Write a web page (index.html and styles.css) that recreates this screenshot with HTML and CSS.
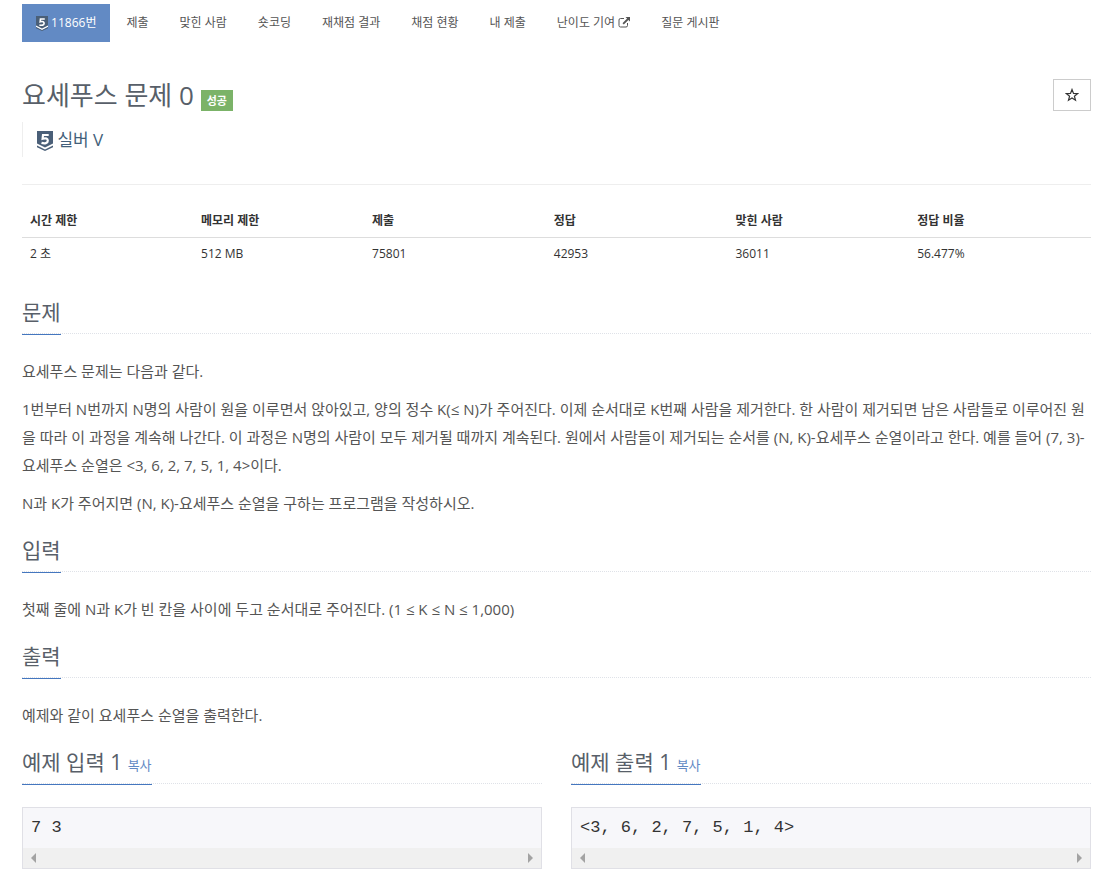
FILE: index.html
```
<!DOCTYPE html>
<html lang="ko">
<head>
    <meta charset="UTF-8">
    <meta name="viewport" content="width=device-width, initial-scale=1">
    <title>11866번: 요세푸스 문제 0</title>
    <link rel="stylesheet" href="styles.css">
</head>
<body>
<svg width="0" height="0" class="defs" aria-hidden="true">
    <symbol id="tier" viewBox="0 0 16 20">
        <path d="M0 0h16v14.500l-8 4.500-8-4.500z" fill="#fff"/>
        <path d="M0 0h16v12.500l-8 4-8-4z" fill="#4a5f78"/>
        <path d="M0 14.500l8 4 8-4v1.700l-8 3.800-8-3.800z" fill="#4a5f78"/>
        <path d="M11.700 4H6L5.600 7.700c3.500-1 5.200 0 5.200 2 0 2.600-3 3.100-6.300 2.200" fill="none" stroke="#fff" stroke-width="2.200"/>
    </symbol>
</svg>
<div class="container">
    <nav>
        <ul class="problem-menu">
            <li class="active"><a href="#"><svg class="tier-small"><use href="#tier"/></svg> 11866번</a></li>
            <li><a href="#">제출</a></li>
            <li><a href="#">맞힌 사람</a></li>
            <li><a href="#">숏코딩</a></li>
            <li><a href="#">재채점 결과</a></li>
            <li><a href="#">채점 현황</a></li>
            <li><a href="#">내 제출</a></li>
            <li><a href="#">난이도 기여 <svg class="external" viewBox="0 0 12 11"><path d="M6 1.500H2.500Q1 1.500 1 3v5.500Q1 10 2.500 10H8q1.500 0 1.500-1.500V6" fill="none" stroke="currentColor"/><path d="M7.500 0H12v4.500l-1.600-1.600-4.600 4.600-1.300-1.300 4.600-4.600z" fill="currentColor"/></svg></a></li>
            <li><a href="#">질문 게시판</a></li>
        </ul>
    </nav>

    <header class="page-header">
        <div class="title-row">
            <h1>요세푸스 문제 0 <span class="label">성공</span></h1>
            <button class="star" type="button" aria-label="즐겨찾기"><svg viewBox="0 0 14 14"><path d="M7 1.500l1.500 3.900 4.100.2-3.200 2.600 1.100 4L7 10l-3.500 2.200 1.100-4L1.400 5.600l4.100-.2z" fill="none" stroke="currentColor" stroke-width="1.200"/></svg></button>
        </div>
        <div class="tier"><svg class="tier-large"><use href="#tier"/></svg> 실버 V</div>
    </header>

    <table class="info">
        <thead>
            <tr>
                <th class="narrow">시간 제한</th>
                <th class="narrow">메모리 제한</th>
                <th>제출</th>
                <th>정답</th>
                <th>맞힌 사람</th>
                <th>정답 비율</th>
            </tr>
        </thead>
        <tbody>
            <tr>
                <td>2 초</td>
                <td>512 MB</td>
                <td>75801</td>
                <td>42953</td>
                <td>36011</td>
                <td>56.477%</td>
            </tr>
        </tbody>
    </table>

    <section>
        <div class="headline"><h2>문제</h2></div>
        <p>요세푸스 문제는 다음과 같다.</p>
        <p>1번부터 N번까지 N명의 사람이 원을 이루면서 앉아있고, 양의 정수 K(≤ N)가 주어진다. 이제 순서대로 K번째 사람을 제거한다. 한 사람이 제거되면 남은 사람들로 이루어진 원을 따라 이 과정을 계속해 나간다. 이 과정은 N명의 사람이 모두 제거될 때까지 계속된다. 원에서 사람들이 제거되는 순서를 (N, K)-요세푸스 순열이라고 한다. 예를 들어 (7, 3)-요세푸스 순열은 &lt;3, 6, 2, 7, 5, 1, 4&gt;이다.</p>
        <p>N과 K가 주어지면 (N, K)-요세푸스 순열을 구하는 프로그램을 작성하시오.</p>
    </section>

    <section>
        <div class="headline"><h2>입력</h2></div>
        <p>첫째 줄에 N과 K가 빈 칸을 사이에 두고 순서대로 주어진다. (1 ≤ K ≤ N ≤ 1,000)</p>
    </section>

    <section>
        <div class="headline"><h2>출력</h2></div>
        <p>예제와 같이 요세푸스 순열을 출력한다.</p>
    </section>

    <div class="samples">
        <section>
            <div class="headline"><h2>예제 입력 1 <button class="copy" type="button">복사</button></h2></div>
            <div class="sampledata">
                <pre>7 3</pre>
                <div class="scrollbar"></div>
            </div>
        </section>
        <section>
            <div class="headline"><h2>예제 출력 1 <button class="copy" type="button">복사</button></h2></div>
            <div class="sampledata">
                <pre>&lt;3, 6, 2, 7, 5, 1, 4&gt;</pre>
                <div class="scrollbar"></div>
            </div>
        </section>
    </div>
</div>
</body>
</html>
```
FILE: styles.css
```
*{
    box-sizing: border-box;
}
body{
    margin: 0;
    background-color: #fff;
    color: #333;
    font-family: "Open Sans", "Noto Sans CJK KR", sans-serif;
    font-size: 12px;
    line-height: 18px;
}
button{
    font-family: inherit;
    cursor: pointer;
}
.defs{
    position: absolute;
}
.container{
    padding: 4px 17px 15px 22px;
}

/* menu */
.problem-menu{
    display: flex;
    flex-wrap: wrap;
    gap: 1px;
    margin: 0;
    padding: 0;
    list-style: none;
}
.problem-menu a{
    display: block;
    padding: 10px 15px;
    color: #555;
    text-decoration: none;
}
.problem-menu .active a{
    padding: 10px 14px;
    background-color: #628ac4;
    color: #fff;
}
.tier-small{
    width: 12px;
    height: 15px;
    vertical-align: -4px;
}
.external{
    width: 12px;
    height: 11px;
    vertical-align: -1px;
}

/* title */
.page-header{
    margin-top: 37px;
    padding-bottom: 27px;
    border-bottom: 1px solid #eee;
}
.title-row{
    display: flex;
    justify-content: space-between;
    align-items: center;
}
h1{
    margin: 0;
    color: #585f69;
    font-size: 26px;
    font-weight: 400;
    line-height: 32px;
}
.label{
    display: inline-block;
    padding: 0 6px;
    background-color: #7bb368;
    color: #fff;
    font-size: 11px;
    font-weight: 700;
    line-height: 21px;
}
.star{
    display: flex;
    justify-content: center;
    align-items: center;
    width: 38px;
    height: 32px;
    padding: 0;
    border: 1px solid #ccc;
    background-color: #fff;
    color: #333;
}
.star svg{
    width: 14px;
    height: 14px;
}
.tier{
    margin-top: 11px;
    padding-left: 14px;
    border-left: 1px solid #eee;
    color: #435f7a;
    font-size: 17px;
    line-height: 35px;
}
.tier-large{
    width: 16px;
    height: 20px;
    vertical-align: -5px;
}

/* limits and statistics */
.info{
    width: 100%;
    margin: 20px 0 25px;
    border-collapse: collapse;
    table-layout: fixed;
}
.info th,
.info td{
    width: 17%;
    padding: 8px;
    text-align: left;
    line-height: 16px;
}
.info .narrow{
    width: 16%;
}
.info th{
    border-bottom: 1px solid #ddd;
}

/* sections */
.headline{
    margin-bottom: 23px;
    border-bottom: 1px dotted #dfe2e8;
}
h2{
    display: inline-block;
    margin: 0 0 -2px;
    padding-bottom: 4px;
    border-bottom: 1px solid #4577bf;
    color: #585f69;
    font-size: 21px;
    font-weight: 400;
    line-height: 35px;
    vertical-align: top;
}
p{
    margin: 0 0 10px;
    color: #555;
    font-size: 15px;
    line-height: 28px;
}
section{
    margin-bottom: 16px;
}

/* samples */
.samples{
    display: grid;
    grid-template-columns: 1fr 1fr;
    gap: 29px;
}
.copy{
    padding: 0;
    border: 0;
    background: none;
    color: #628ac4;
    font-size: 13px;
}
.sampledata{
    border: 1px solid #e0e0e6;
    background-color: #f7f7fa;
}
pre{
    margin: 0;
    padding: 8px;
    color: #333;
    font-family: "Liberation Mono", monospace;
    font-size: 17px;
    line-height: 24px;
}
.scrollbar{
    display: flex;
    justify-content: space-between;
    padding: 5px 8px;
    background-color: #f0f0f0;
}
.scrollbar:before,
.scrollbar:after{
    content: "";
    border: 5px solid transparent;
}
.scrollbar:before{
    border-left-width: 0;
    border-right-color: #a3a3a3;
}
.scrollbar:after{
    border-right-width: 0;
    border-left-color: #a3a3a3;
}
```
